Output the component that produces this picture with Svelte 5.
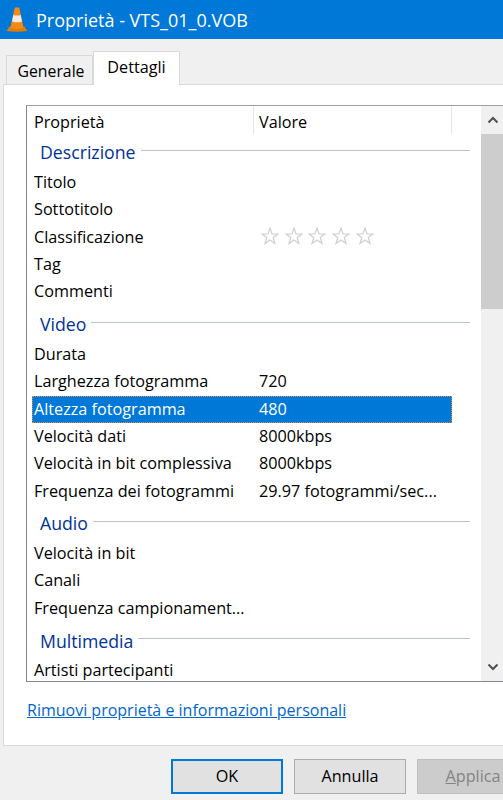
<script>
  const sections = [
    { name: "Descrizione", rows: [["Titolo"], ["Sottotitolo"], ["Classificazione", "", true], ["Tag"], ["Commenti"]] },
    { name: "Video", rows: [
      ["Durata"],
      ["Larghezza fotogramma", "720"],
      ["Altezza fotogramma", "480"],
      ["Velocità dati", "8000kbps"],
      ["Velocità in bit complessiva", "8000kbps"],
      ["Frequenza dei fotogrammi", "29.97 fotogrammi/sec..."]
    ] },
    { name: "Audio", rows: [["Velocità in bit"], ["Canali"], ["Frequenza campionament..."]] },
    { name: "Multimedia", rows: [["Artisti partecipanti"]] }
  ];
  const stars = [0, 1, 2, 3, 4];
</script>

<main>
  <header class="titlebar">
    <svg class="cone" viewBox="0 0 22 25" width="22" height="25">
      <path d="M0.5 24 L3.5 19.5 H18.5 L21.5 24 Q11 25.5 0.5 24Z" fill="#e07c0a" />
      <path d="M8.8 0.5 H13.2 L17.6 21 Q11 23 4.4 21Z" fill="#f58a10" />
      <path d="M7.3 8 Q11 9.2 14.7 8 L16 14.5 Q11 16.2 6 14.5Z" fill="#eeeae4" />
    </svg>
    <span>Proprietà - VTS_01_0.VOB</span>
  </header>

  <div class="tabs">
    <div class="tab">Generale</div>
    <div class="tab active">Dettagli</div>
  </div>

  <section class="panel">
    <div class="list">
      <div class="content">
        <div class="head">
          <div class="col-a">Proprietà</div>
          <div class="col-b">Valore</div>
        </div>
        {#each sections as section}
          <div class="group">
            <span>{section.name}</span>
            <i></i>
          </div>
          {#each section.rows as row}
            <div class="row" class:selected={row[0] === "Altezza fotogramma"}>
              <div class="col-a">{row[0]}</div>
              <div class="col-b">
                {#if row[2]}
                  <div class="stars">
                    {#each stars as s}
                      <svg viewBox="0 0 18 18" width="18" height="18">
                        <path d="M9 1 L11 7 H17 L12.2 10.5 L14 16.5 L9 12.9 L4 16.5 L5.8 10.5 L1 7 H7Z" fill="#fff" stroke="#cfcfcf" stroke-width="1.2" />
                      </svg>
                    {/each}
                  </div>
                {:else}
                  {row[1] ?? ""}
                {/if}
              </div>
            </div>
          {/each}
        {/each}
      </div>
      <div class="scrollbar">
        <div class="arrow">
          <svg viewBox="0 0 12 8" width="12" height="8"><path d="M1.5 6.5 L6 2 L10.5 6.5" fill="none" stroke="#505050" stroke-width="2" /></svg>
        </div>
        <div class="track"><div class="thumb"></div></div>
        <div class="arrow">
          <svg viewBox="0 0 12 8" width="12" height="8"><path d="M1.5 1.5 L6 6 L10.5 1.5" fill="none" stroke="#505050" stroke-width="2" /></svg>
        </div>
      </div>
    </div>
    <a class="link" href="#top">Rimuovi proprietà e informazioni personali</a>
  </section>

  <footer class="buttons">
    <div class="btn default">OK</div>
    <div class="btn">Annulla</div>
    <div class="btn disabled"><u>A</u>pplica</div>
  </footer>
</main>

<style>
  :global(body) {
    margin: 0;
    background: #f0f0f0;
  }

  main {
    width: 503px;
    height: 800px;
    overflow: hidden;
    display: flex;
    flex-direction: column;
    font-family: "Open Sans", "Noto Sans", sans-serif;
    font-size: 16.2px;
    color: #000;
    background: #f0f0f0;
  }

  .titlebar {
    height: 39px;
    flex: none;
    background: #0078d7;
    color: #fff;
    display: flex;
    align-items: center;
    gap: 8px;
    padding-left: 6px;
    font-size: 18px;
    box-sizing: border-box;
  }

  .tabs {
    height: 45px;
    flex: none;
    display: flex;
    align-items: flex-end;
    padding-left: 6px;
  }

  .tab {
    width: 87px;
    height: 29px;
    box-sizing: border-box;
    border: 1px solid #d9d9d9;
    border-bottom: none;
    padding-left: 3px;
    font-size: 15.8px;
    text-align: center;
    line-height: 31px;
    background: #f0f0f0;
  }

  .tab.active {
    height: 34px;
    padding-left: 0;
    font-size: 16.2px;
    line-height: 30px;
    background: #fff;
    position: relative;
    top: 1px;
    z-index: 1;
  }

  .panel {
    height: 662px;
    flex: none;
    margin-left: 3px;
    box-sizing: border-box;
    background: #fff;
    border: 1px solid #d9d9d9;
    border-right: none;
    padding: 20px 0 0 22px;
  }

  .list {
    height: 577px;
    box-sizing: border-box;
    border: 1px solid #828790;
    border-right: none;
    border-top-color: #a0a0a0;
    display: flex;
    overflow: hidden;
  }

  .content {
    width: 453px;
    flex: none;
    overflow: hidden;
    padding-left: 5px;
    box-sizing: border-box;
  }

  .head, .row {
    display: flex;
    width: 420px;
    box-sizing: border-box;
  }

  .head {
    height: 28px;
    line-height: 32px;
  }

  .head .col-b {
    border-left: 1px solid #e5e5e5;
    border-right: 1px solid #e5e5e5;
    padding-left: 5px;
    width: 199px;
    flex: none;
    box-sizing: border-box;
  }

  .col-a {
    width: 221px;
    flex: none;
    padding-left: 2px;
    box-sizing: border-box;
    white-space: nowrap;
    overflow: hidden;
  }

  .col-b {
    padding-left: 6px;
    white-space: nowrap;
  }

  .group {
    height: 33px;
    margin-top: 1.9px;
    display: flex;
    align-items: center;
    gap: 5px;
    padding-left: 8px;
    color: #003399;
    font-size: 17.7px;
    width: 438px;
    box-sizing: border-box;
  }

  .group i {
    flex: 1;
    height: 1px;
    margin-top: -4px;
    background: #b9c3dd;
  }

  .row {
    height: 27.4px;
    line-height: 27.4px;
  }

  .row.selected {
    background: #0078d7;
    color: #fff;
    outline: 1px dotted #d9904a;
    outline-offset: -1px;
  }

  .stars {
    display: flex;
    gap: 5.7px;
    height: 100%;
    margin-top: -1px;
    align-items: center;
    padding-left: 2px;
  }

  .scrollbar {
    width: 23px;
    flex: none;
    display: flex;
    flex-direction: column;
    background: #f0f0f0;
    margin-left: 1px;
  }

  .arrow {
    height: 28px;
    flex: none;
    display: flex;
    align-items: center;
    justify-content: center;
  }

  .track {
    flex: 1;
  }

  .thumb {
    height: 175px;
    background: #cdcdcd;
  }

  .link {
    display: block;
    margin-top: 17px;
    margin-left: 1px;
    font-size: 16px;
    color: #0066cc;
    text-decoration: underline;
  }

  .buttons {
    display: flex;
    gap: 11px;
    padding: 13px 0 0 171px;
  }

  .btn {
    width: 112px;
    height: 35px;
    flex: none;
    box-sizing: border-box;
    border: 1px solid #adadad;
    background: #e1e1e1;
    text-align: center;
    line-height: 33px;
  }

  .btn.default {
    border: 2px solid #0078d7;
    line-height: 31px;
  }

  .btn.disabled {
    background: #cccccc;
    border-color: #bfbfbf;
    color: #838383;
  }
</style>
